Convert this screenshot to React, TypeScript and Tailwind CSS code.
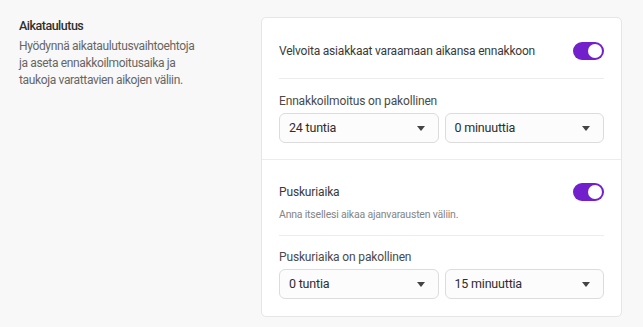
import React from "react";

function Toggle() {
  return (
    <span className="relative inline-flex h-[18px] w-[31px] shrink-0 items-center rounded-full bg-[#7120cc]">
      <span className="absolute right-[2px] h-[14px] w-[14px] rounded-full bg-white" />
    </span>
  );
}

function Select({ value }: { value: string }) {
  return (
    <div className="flex h-[30px] flex-1 items-center justify-between rounded-[6px] border border-[#dcdcdc] bg-[#fcfcfc] pl-[9px] pr-[13px] text-[12.5px] tracking-[-0.2px] text-[#2e2e2e]">
      <span>{value}</span>
      <svg width="8" height="5" viewBox="0 0 8 5">
        <path d="M0 0h8L4 5z" fill="#444" />
      </svg>
    </div>
  );
}

export default function App() {
  return (
    <div
      className="flex h-[327px] w-[643px] bg-[#f8f8f8] pl-[19px] pr-[21px] pt-[17px]"
      style={{ fontFamily: "Roboto, 'Noto Sans', sans-serif" }}
    >
      <div className="w-[242px] shrink-0">
        <h2 className="mt-[-1px] text-[12.5px] font-medium leading-[20px] tracking-[-0.5px] text-[#2f2f2f]">Aikataulutus</h2>
        <p className="mt-[2px] text-[12px] leading-[17px] tracking-[-0.35px] text-[#666]">
          Hyödynnä aikataulutusvaihtoehtoja
          <br />
          ja aseta ennakkoilmoitusaika ja
          <br />
          taukoja varattavien aikojen väliin.
        </p>
      </div>

      <div className="h-[300px] flex-1 rounded-[5px] border border-[#e6e6e6] bg-white">
        <div className="border-b border-[#ececec] px-[17px] pb-[16px] pt-[23px]">
          <div className="flex h-[20px] items-center justify-between">
            <span className="text-[12px] tracking-[-0.2px] text-[#3a3a3a]">Velvoita asiakkaat varaamaan aikansa ennakkoon</span>
            <Toggle />
          </div>
          <div className="mt-[17px] border-t border-[#ececec] pt-[13px]">
            <div className="text-[12px] leading-[18px] tracking-[-0.15px] text-[#4a4a4a]">Ennakkoilmoitus on pakollinen</div>
            <div className="mt-[3px] flex gap-[6px]">
              <Select value="24 tuntia" />
              <Select value="0 minuuttia" />
            </div>
          </div>
        </div>

        <div className="px-[17px] pt-[22px]">
          <div className="flex h-[20px] items-center justify-between">
            <span className="text-[12px] tracking-[-0.15px] text-[#3a3a3a]">Puskuriaika</span>
            <Toggle />
          </div>
          <div className="mt-[5px] text-[10.5px] leading-[16px] tracking-[-0.2px] text-[#858585]">Anna itsellesi aikaa ajanvarausten väliin.</div>
          <div className="mt-[12px] border-t border-[#ececec] pt-[12px]">
            <div className="text-[12px] leading-[18px] tracking-[-0.15px] text-[#4a4a4a]">Puskuriaika on pakollinen</div>
            <div className="mt-[3px] flex gap-[6px]">
              <Select value="0 tuntia" />
              <Select value="15 minuuttia" />
            </div>
          </div>
        </div>
      </div>
    </div>
  );
}
